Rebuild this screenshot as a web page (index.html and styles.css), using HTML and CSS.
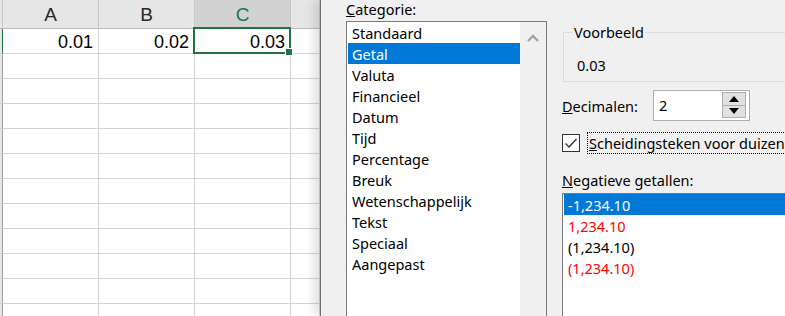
FILE: index.html
```html
<!DOCTYPE html>
<html lang="nl">
<head>
    <meta charset="UTF-8">
    <title>Cellen opmaken</title>
    <link rel="stylesheet" href="styles.css">
</head>
<body>
    <div class="screen">
        <div class="sheet">
            <div class="cell corner head"></div>
            <div class="cell head">A</div>
            <div class="cell head">B</div>
            <div class="cell head active">C</div>
            <div class="cell head"></div>

            <div class="cell corner sel-row"></div>
            <div class="cell num">0.01</div>
            <div class="cell num">0.02</div>
            <div class="cell num selected">0.03<span class="handle"></span></div>
            <div class="cell"></div>
        </div>

        <div class="dialog">
            <div class="cat-col">
                <div class="label"><u>C</u>ategorie:</div>
                <div class="listbox">
                    <ul class="items">
                        <li>Standaard</li>
                        <li class="current">Getal</li>
                        <li>Valuta</li>
                        <li>Financieel</li>
                        <li>Datum</li>
                        <li>Tijd</li>
                        <li>Percentage</li>
                        <li>Breuk</li>
                        <li>Wetenschappelijk</li>
                        <li>Tekst</li>
                        <li>Speciaal</li>
                        <li>Aangepast</li>
                    </ul>
                    <div class="scrollbar">
                        <svg width="12" height="8" viewBox="0 0 12 8">
                            <path d="M1 7 L6 2 L11 7" fill="none" stroke="#a3a3a3" stroke-width="2.4"/>
                        </svg>
                    </div>
                </div>
            </div>

            <div class="opts">
                <fieldset class="preview">
                    <legend>Voorbeeld</legend>
                    <div class="preview-value">0.03</div>
                </fieldset>

                <div class="decimals">
                    <label for="dec"><u>D</u>ecimalen:</label>
                    <div class="spin">
                        <span id="dec" class="spin-value">2</span>
                        <div class="spin-btns">
                            <div class="spin-btn">
                                <svg width="10" height="6" viewBox="0 0 10 6"><path d="M0 6 L5 0 L10 6 Z" fill="#000"/></svg>
                            </div>
                            <div class="spin-btn">
                                <svg width="10" height="6" viewBox="0 0 10 6"><path d="M0 0 L10 0 L5 6 Z" fill="#000"/></svg>
                            </div>
                        </div>
                    </div>
                </div>

                <div class="check-row">
                    <span class="checkbox">
                        <svg width="16" height="16" viewBox="0 0 16 16">
                            <path d="M2.5 8.5 L6 12 L13.5 4" fill="none" stroke="#333" stroke-width="1.4"/>
                        </svg>
                    </span>
                    <span class="check-label"><u>S</u>cheidingsteken voor duizendtallen</span>
                </div>

                <div class="label neg-label"><u>N</u>egatieve getallen:</div>
                <ul class="neg-list">
                    <li class="current">-1,234.10</li>
                    <li class="red">1,234.10</li>
                    <li>(1,234.10)</li>
                    <li class="red">(1,234.10)</li>
                </ul>
            </div>
        </div>
    </div>

    <script>
        // lege rijen onder de eerste rij aanvullen
        const sheet = document.querySelector('.sheet');
        for (let r = 0; r < 11; r++) {
            for (let c = 0; c < 5; c++) {
                const cell = document.createElement('div');
                cell.className = c === 0 ? 'cell corner' : 'cell';
                sheet.appendChild(cell);
            }
        }
    </script>
</body>
</html>
```

FILE: styles.css
```css
body {
    margin: 0;
    width: 785px;
    height: 316px;
    overflow: hidden;
    background: #fff;
}

.screen {
    display: flex;
    height: 316px;
}

/* werkblad */
.sheet {
    width: 320px;
    flex-shrink: 0;
    display: grid;
    grid-template-columns: 3px 96px 96px 96px 1fr;
    grid-template-rows: 29px;
    grid-auto-rows: 25px;
    font-family: "Liberation Sans", Arial, sans-serif;
    align-content: start;
}

.cell {
    box-sizing: border-box;
    border-right: 1px solid #d4d4d4;
    border-bottom: 1px solid #d4d4d4;
    position: relative;
}

.cell.corner {
    border-right: 1px solid #9e9e9e;
    background: #e6e6e6;
}

.cell.sel-row {
    border-right: 1px solid #217346;
}

.cell.head {
    background: #e6e6e6;
    border-right-color: #c8c8c8;
    border-bottom-color: #bdbdbd;
    color: #262626;
    font-size: 19px;
    text-align: center;
    line-height: 30px;
}

.cell.head.active {
    background: #d2d2d2;
    color: #217346;
}

.cell.num {
    font-size: 18px;
    text-align: right;
    padding-right: 5px;
    line-height: 27px;
}

.cell.selected::after {
    content: "";
    position: absolute;
    left: -2px;
    top: -2px;
    right: -1px;
    bottom: -1px;
    border: 2px solid #217346;
}

.handle {
    position: absolute;
    right: -3px;
    bottom: -3px;
    width: 6px;
    height: 6px;
    background: #217346;
    border: 1px solid #fff;
    z-index: 1;
}

/* dialoogvenster */
.dialog {
    flex: 1;
    position: relative;
    z-index: 2;
    display: flex;
    gap: 15px;
    padding-left: 25px;
    background: #f0f0f0;
    border-left: 1px solid #6d6d6d;
    box-shadow: -6px 0 10px rgba(0, 0, 0, 0.12);
    font-family: "Noto Sans", "Segoe UI", sans-serif;
    font-size: 14.5px;
    color: #000;
    overflow: hidden;
}

.label {
    line-height: 18px;
    white-space: nowrap;
}

.cat-col {
    width: 201px;
    flex-shrink: 0;
    display: flex;
    flex-direction: column;
}

.listbox {
    margin-top: 3px;
    flex: 1;
    display: flex;
    border: 1px solid #7a7a7a;
    border-bottom: none;
    background: #fff;
    padding: 0 0 0 1px;
}

.items,
.neg-list {
    list-style: none;
    margin: 0;
    padding: 0;
}

.items {
    flex: 1;
}

.items li,
.neg-list li {
    height: 21px;
    box-sizing: border-box;
    padding: 2px 0 0 4px;
    line-height: 19px;
    white-space: nowrap;
}

.items li.current,
.neg-list li.current {
    background: #0078d7;
    color: #fff;
}

.scrollbar {
    width: 26px;
    background: #f0f0f0;
    display: flex;
    justify-content: center;
    padding-top: 12px;
    box-sizing: border-box;
}

.scrollbar svg {
    display: block;
}

.opts {
    width: 320px;
    flex-shrink: 0;
    display: flex;
    flex-direction: column;
}

.preview {
    margin: 24px 0 0 1px;
    padding: 17px 0 8px 9px;
    border: 1px solid #dcdcdc;
    min-width: 0;
}

.preview legend {
    padding: 0 1px;
    line-height: 16px;
}

.preview-value {
    line-height: 16px;
    padding-left: 4px;
}

.decimals {
    margin-top: 8px;
    display: flex;
    align-items: center;
}

.decimals label {
    width: 91px;
}

.spin {
    width: 97px;
    height: 31px;
    box-sizing: border-box;
    border: 1px solid #adadad;
    background: #fff;
    display: flex;
}

.spin-value {
    flex: 1;
    padding-left: 5px;
    line-height: 29px;
}

.spin-btns {
    margin: 1px 3px 2px 0;
    width: 24px;
    display: flex;
    flex-direction: column;
    border: 1px solid #adadad;
    box-sizing: border-box;
}

.spin-btn {
    flex: 1;
    background: #e1e1e1;
    display: flex;
    align-items: center;
    justify-content: center;
}

.spin-btn + .spin-btn {
    border-top: 1px solid #adadad;
}

.check-row {
    margin-top: 11px;
    display: flex;
    align-items: center;
    height: 22px;
}

.checkbox {
    width: 18px;
    height: 18px;
    box-sizing: border-box;
    border: 1px solid #333;
    background: #fff;
    display: flex;
    align-items: center;
    justify-content: center;
}

.check-label {
    margin-left: 7px;
    border: 1px dotted #000;
    padding: 0 1px;
    line-height: 20px;
    white-space: nowrap;
}

.neg-label {
    margin-top: 17px;
}

.neg-list {
    margin-top: 4px;
    flex: 1;
    border: 1px solid #7a7a7a;
    border-bottom: none;
    border-right: none;
    background: #fff;
    padding: 0 0 0 1px;
}

.neg-list li.red {
    color: #ff0000;
}
```
